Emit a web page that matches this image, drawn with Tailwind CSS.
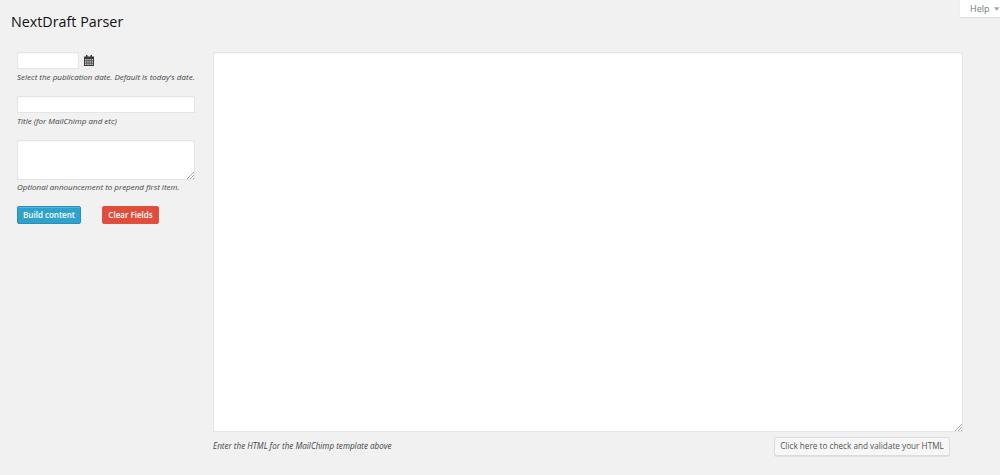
<!DOCTYPE html>
<html>
<head>
<meta charset="utf-8">
<script src="https://cdn.jsdelivr.net/npm/@tailwindcss/browser@4"></script>
</head>
<body class="bg-[#f1f1f1] font-['Open_Sans',sans-serif] text-[#444] overflow-hidden">
<div class="relative w-[1000px] h-[475px]">
  <div class="absolute top-0 right-0 w-[40px] h-[17px] bg-white shadow-[0_1px_1px_rgba(0,0,0,0.08)] flex items-center pl-[10px] gap-[5px] text-[9px] text-[#72777c]">
    <span>Help</span>
    <svg width="6" height="4" viewBox="0 0 6 4"><path d="M0 0h6L3 4z" fill="#a0a5aa"/></svg>
  </div>
  <h1 class="pl-[11px] pt-[11px] h-[52px] text-[14.3px] leading-[22px] font-normal text-[#111]">NextDraft Parser</h1>
  <div class="flex">
    <div class="w-[213px] pl-[17px] shrink-0">
      <div class="flex items-center gap-[5px]">
        <input type="text" class="w-[62px] h-[17px] bg-white border border-[#e5e5e5] shadow-[inset_0_1px_2px_rgba(0,0,0,0.04)]">
        <svg width="10" height="11" viewBox="0 0 10 11"><path fill="#3a3a3a" d="M0 1.500h2V0h1.500v1.500h3V0H8v1.500h2V11H0z"/><path fill="#c8c8c8" d="M1 4h1.500v1.500H1zM3.200 4h1.500v1.500H3.200zM5.400 4h1.500v1.500H5.400zM7.600 4h1.400v1.500H7.600zM1 6.200h1.500v1.500H1zM3.200 6.200h1.500v1.500H3.200zM5.400 6.200h1.500v1.500H5.400zM7.600 6.200h1.400v1.500H7.600zM1 8.400h1.500v1.500H1zM3.200 8.400h1.500v1.500H3.200zM5.400 8.400h1.500v1.500H5.400zM7.600 8.400h1.400v1.500H7.600z"/></svg>
      </div>
      <p class="mt-[1px] h-[26px] text-[8px] leading-[14px] italic">Select the publication date. Default is today's date.</p>
      <input type="text" class="block w-[178px] h-[17px] bg-white border border-[#e5e5e5] shadow-[inset_0_1px_2px_rgba(0,0,0,0.04)]">
      <p class="mt-[1px] h-[26px] text-[8px] leading-[14px] italic">Title (for MailChimp and etc)</p>
      <div class="relative w-[178px] h-[40px]">
        <textarea class="block w-[178px] h-[40px] resize-none bg-white border border-[#e5e5e5] shadow-[inset_0_1px_2px_rgba(0,0,0,0.04)]"></textarea>
        <svg class="absolute right-[1px] bottom-[1px]" width="7" height="7" viewBox="0 0 7 7"><path d="M0 7L7 0M3 7L7 3M6 7L7 6" stroke="#aaaaaa" fill="none"/></svg>
      </div>
      <p class="h-[26px] text-[8px] leading-[14px] italic">Optional announcement to prepend first item.</p>
      <div class="flex gap-[21px]">
        <button class="w-[64px] h-[18px] rounded-[2px] bg-[#2ea2cc] border border-[#2a8fb8] text-white text-[8px] font-semibold leading-none shadow-[inset_0_1px_0_rgba(120,200,230,0.5)]">Build content</button>
        <button class="w-[57px] h-[18px] rounded-[2px] bg-[#e14d3a] border border-[#d9563c] text-white text-[8px] font-semibold leading-none">Clear Fields</button>
      </div>
    </div>
    <div class="w-[749px] shrink-0">
      <div class="relative w-[750px] h-[380px]">
        <textarea class="block w-[750px] h-[380px] resize-none bg-white border border-[#e5e5e5] shadow-[inset_0_1px_2px_rgba(0,0,0,0.04)]"></textarea>
        <svg class="absolute right-[1px] bottom-[1px]" width="7" height="7" viewBox="0 0 7 7"><path d="M0 7L7 0M3 7L7 3M6 7L7 6" stroke="#aaaaaa" fill="none"/></svg>
      </div>
      <div class="flex justify-between items-start pt-[5px] pr-[12px]">
        <p class="text-[8.100px] leading-[17px] italic">Enter the HTML for the MailChimp template above</p>
        <button class="w-[176px] h-[19px] rounded-[2px] bg-[#f7f7f7] border border-[#dcdcdc] text-[#555] text-[8.200px] leading-none whitespace-nowrap shadow-[0_1px_0_rgba(0,0,0,0.06)]">Click here to check and validate your HTML</button>
      </div>
    </div>
  </div>
</div>
</body>
</html>
